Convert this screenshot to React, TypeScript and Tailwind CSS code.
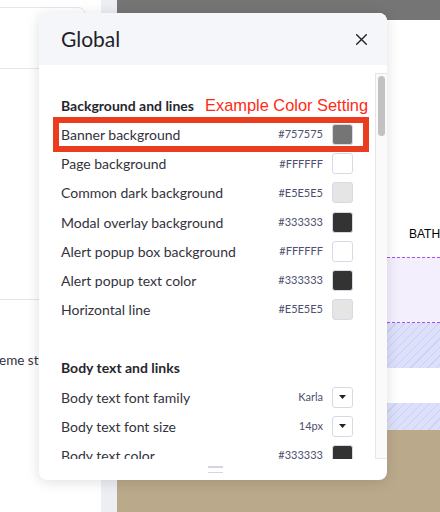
import React from "react";

type Row = { label: string; value: string; kind: "color" | "select"; color?: string };

const section1: Row[] = [
  { label: "Banner background", value: "#757575", kind: "color", color: "#757575" },
  { label: "Page background", value: "#FFFFFF", kind: "color", color: "#FFFFFF" },
  { label: "Common dark background", value: "#E5E5E5", kind: "color", color: "#E5E5E5" },
  { label: "Modal overlay background", value: "#333333", kind: "color", color: "#333333" },
  { label: "Alert popup box background", value: "#FFFFFF", kind: "color", color: "#FFFFFF" },
  { label: "Alert popup text color", value: "#333333", kind: "color", color: "#333333" },
  { label: "Horizontal line", value: "#E5E5E5", kind: "color", color: "#E5E5E5" },
];

const section2: Row[] = [
  { label: "Body text font family", value: "Karla", kind: "select" },
  { label: "Body text font size", value: "14px", kind: "select" },
  { label: "Body text color", value: "#333333", kind: "color", color: "#333333" },
];

function SettingRow({ row }: { row: Row }) {
  return (
    <div className="h-[29.2px] flex items-center justify-between">
      <span className="text-[14px] text-[#33333d] whitespace-nowrap">{row.label}</span>
      <div className="flex items-center gap-[9px]">
        <span className="text-[11px] text-[#4d5070] whitespace-nowrap">{row.value}</span>
        {row.kind === "color" ? (
          <div
            className="w-[21px] h-[21px] rounded-[3px] border border-[#d8d9e4]"
            style={{ backgroundColor: row.color }}
          />
        ) : (
          <div className="w-[21px] h-[21px] rounded-[3px] border border-[#d8d9e4] bg-white flex items-center justify-center">
            <svg width="7" height="4" viewBox="0 0 7 4">
              <path d="M0 0 L7 0 L3.5 4 Z" fill="#222" />
            </svg>
          </div>
        )}
      </div>
    </div>
  );
}

const hatch =
  "bg-[repeating-linear-gradient(135deg,#dde0fa_0px,#dde0fa_5px,#cbcff2_5px,#cbcff2_6px)]";

export default function App() {
  return (
    <div className="relative w-[440px] h-[512px] overflow-hidden bg-white font-['Lato',sans-serif]">
      <div className="flex h-full">
        {/* left panel */}
        <div className="w-[101px] shrink-0 bg-white overflow-hidden">
          <div className="mt-[7px] -ml-[12px] w-[98px] h-[62px] rounded-[8px] border border-[#e6e7ee]" />
          <div className="mt-[230px] border-t border-[#e3e4ea]" />
          <div className="mt-[50px] -ml-[1px] h-[20px] flex items-center text-[13.5px] text-[#33333d] whitespace-nowrap">
            eme styles
          </div>
        </div>
        {/* gutter */}
        <div className="w-[16px] shrink-0 bg-[#eceef3]" />
        {/* preview */}
        <div className="flex-1 flex flex-col overflow-hidden">
          <div className="h-[20px] shrink-0 bg-[#757575]" />
          <div className="h-[237px] shrink-0 bg-white pt-[205px] pl-[292px] whitespace-nowrap text-[12px] text-black font-['Liberation_Sans',sans-serif]">
            BATHROOM
          </div>
          <div className="h-[66px] shrink-0 bg-[#f4effc] border-y border-dashed border-[#a452ef]" />
          <div className={`h-[45px] shrink-0 ${hatch}`} />
          <div className="h-[35px] shrink-0 bg-white" />
          <div className={`h-[27px] shrink-0 ${hatch}`} />
          <div className="flex-1 bg-[#bba98b]" />
        </div>
      </div>

      {/* modal */}
      <div className="absolute left-[39px] top-[13px] w-[348px] h-[467px] rounded-[8px] bg-white shadow-[0_2px_14px_rgba(0,0,0,0.13)] overflow-hidden flex flex-col">
        <div className="h-[52px] shrink-0 bg-[#f5f6fa] flex items-center justify-between pl-[22px] pr-[20px]">
          <span className="text-[21px] text-[#1f1f29]">Global</span>
          <svg width="11" height="11" viewBox="0 0 11 11">
            <path d="M0.7 0.7 L10.3 10.3 M10.3 0.7 L0.7 10.3" stroke="#222" strokeWidth="1.4" strokeLinecap="round" />
          </svg>
        </div>
        <div className="relative h-[394px] shrink-0 overflow-hidden">
          <div className="pt-[25px] pl-[22px] pr-[34px]">
            <div className="h-[30px] flex items-center">
              <span className="text-[14px] font-bold text-[#26262f]">Background and lines</span>
            </div>
            {section1.map((r) => (
              <SettingRow key={r.label} row={r} />
            ))}
            <div className="mt-[29px] h-[29.2px] flex items-center">
              <span className="text-[14px] font-bold text-[#26262f]">Body text and links</span>
            </div>
            {section2.map((r) => (
              <SettingRow key={r.label} row={r} />
            ))}
          </div>
          {/* annotation */}
          <div className="absolute left-[166px] top-[28px] h-[24px] flex items-center text-[16.4px] text-[#ff2a14] font-['Liberation_Sans',sans-serif] whitespace-nowrap">
            Example Color Setting
          </div>
          <div className="absolute left-[14px] top-[52px] w-[316px] h-[35px] border-[6px] border-[#ea3c1f]" />
          {/* scrollbar */}
          <div className="absolute right-0 top-[8px] bottom-0 w-[12px] bg-[#fafafa] border-l border-t border-b border-[#e6e6e6]">
            <div className="ml-[1.5px] mt-[2px] w-[7px] h-[60px] rounded-full bg-[#c2c2c2]" />
          </div>
        </div>
        <div className="flex-1 flex flex-col items-center justify-center gap-[4px] pl-[5px]">
          <div className="w-[15px] h-[1.5px] bg-[#d3d5e2]" />
          <div className="w-[15px] h-[1.5px] bg-[#d3d5e2]" />
        </div>
      </div>
    </div>
  );
}
